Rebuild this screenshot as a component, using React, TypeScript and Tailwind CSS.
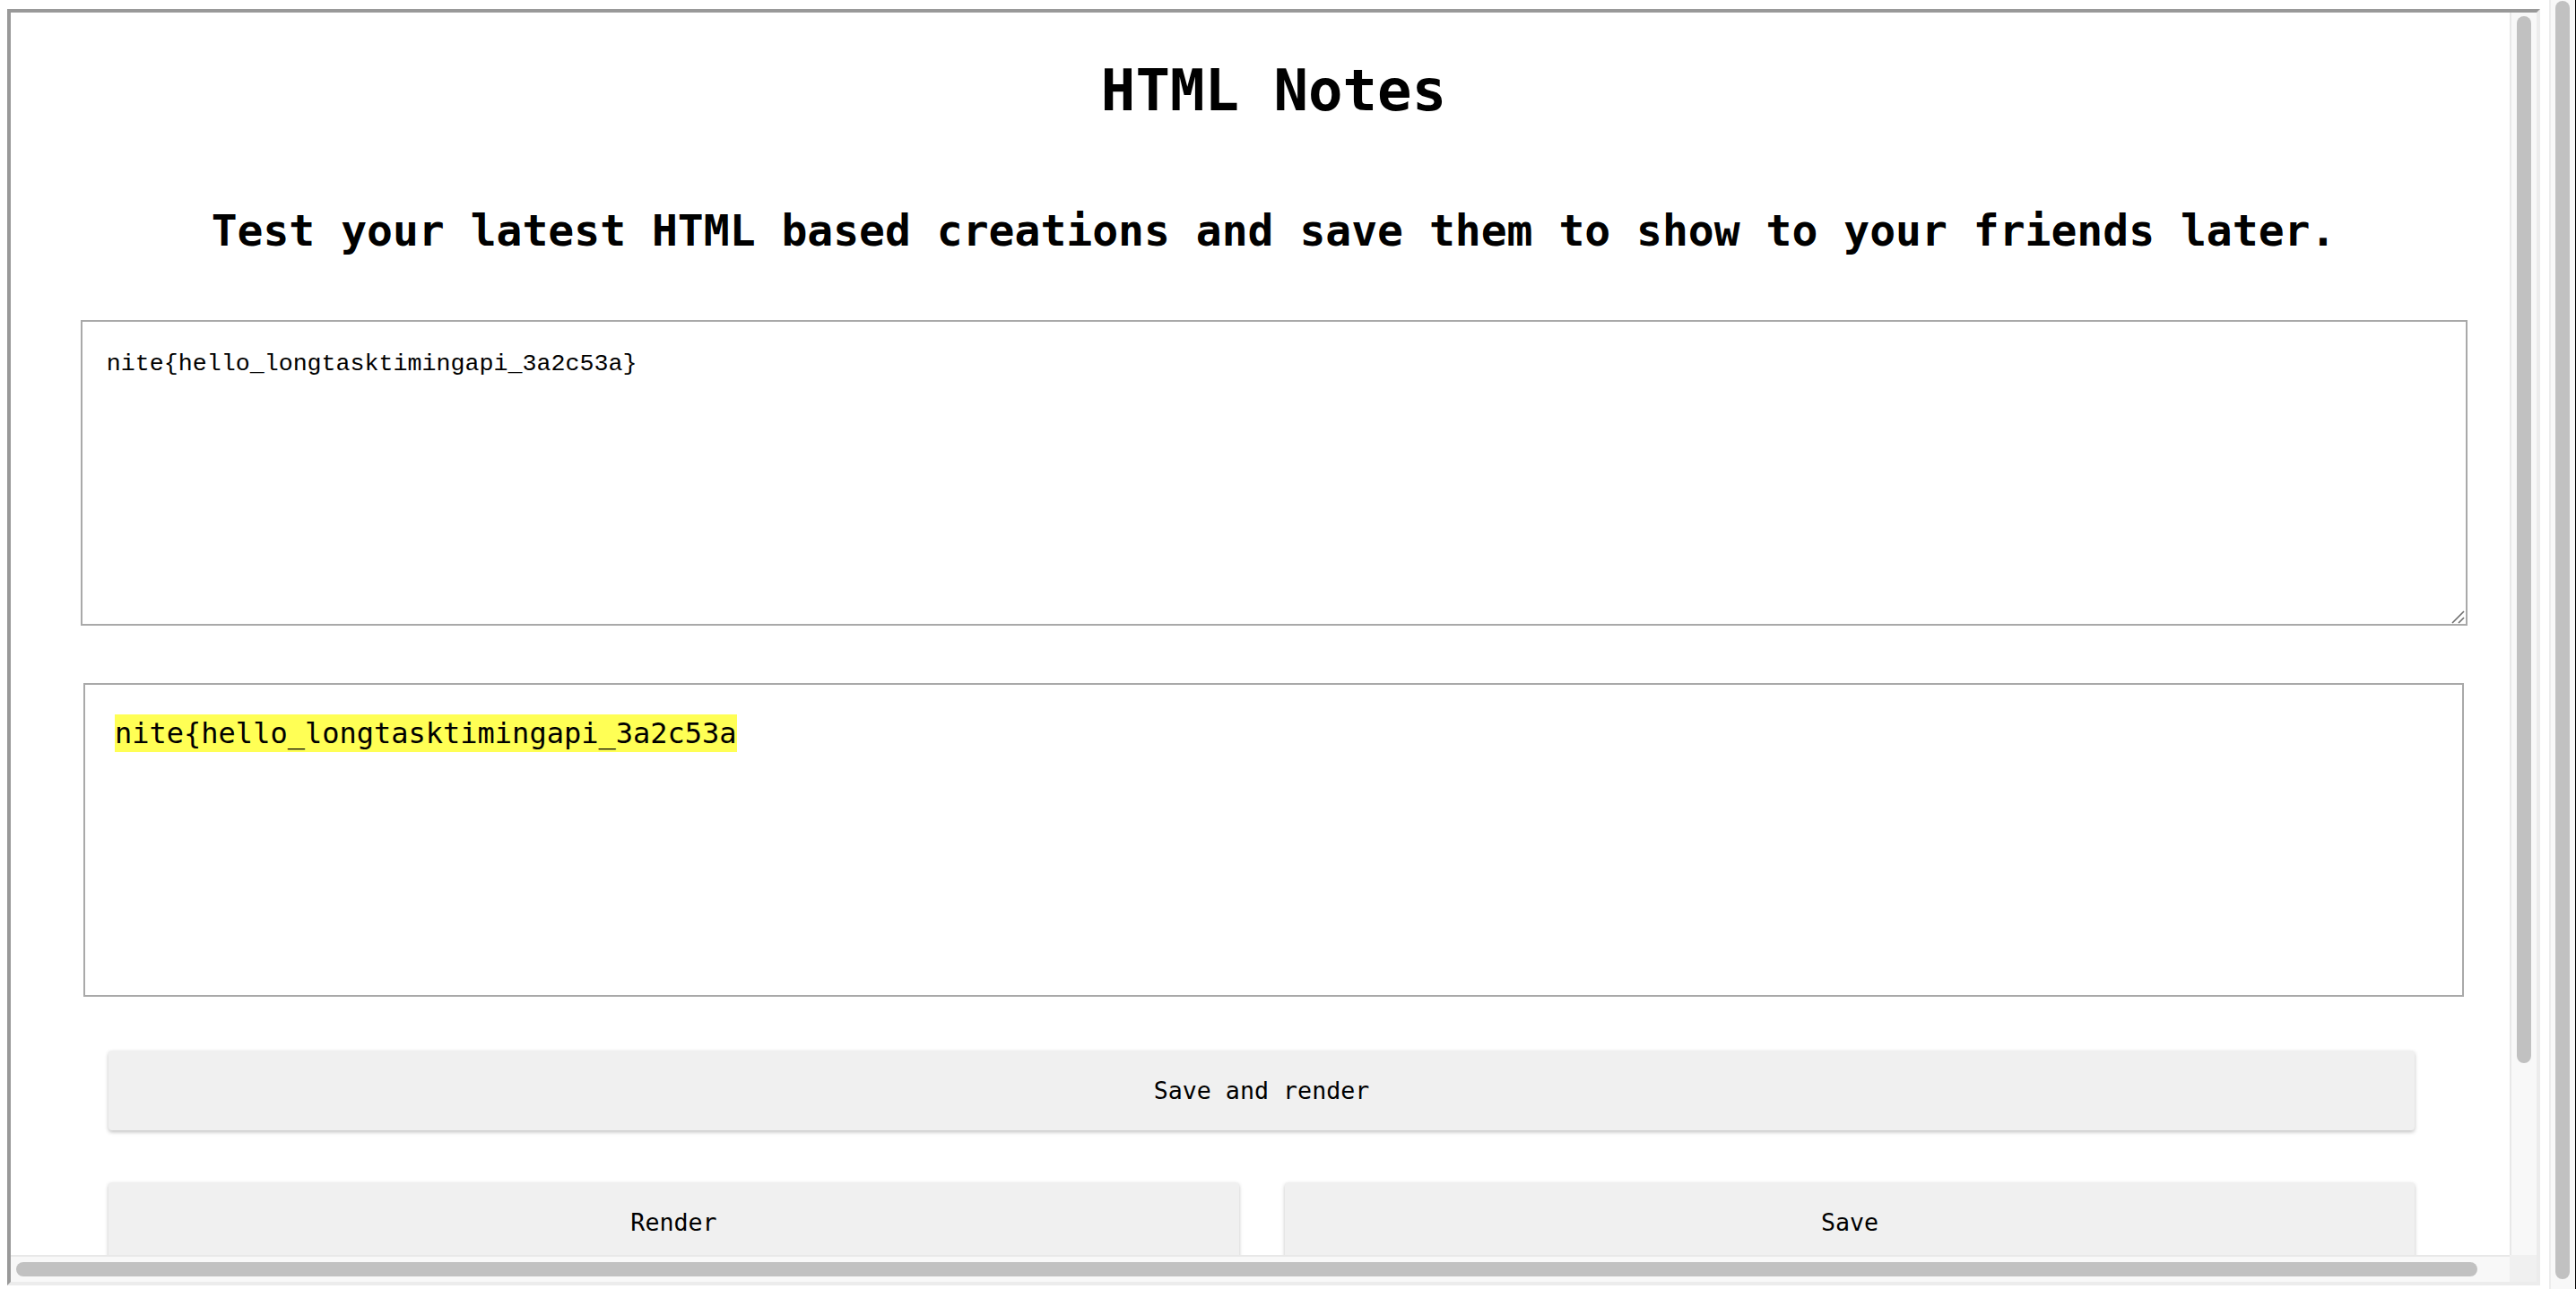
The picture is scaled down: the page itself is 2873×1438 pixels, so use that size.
const mono = "font-['DejaVu_Sans_Mono',monospace]";

function VTrack({ thumbTop, thumbHeight }: { thumbTop: number; thumbHeight: number }) {
  return (
    <div className="flex h-full w-[30px] shrink-0 flex-col border-l-2 border-[#e8e8e8] bg-[#f8f8f8] pl-[6px]">
      <div style={{ height: thumbTop }} />
      <div className="w-[16px] rounded-full bg-[#c1c1c1]" style={{ height: thumbHeight }} />
    </div>
  );
}

function ResizeGrip() {
  return (
    <svg
      className="absolute bottom-0 right-0"
      width="16"
      height="16"
      viewBox="0 0 16 16"
      fill="none"
      stroke="#6b6b6b"
      strokeWidth="1.6"
    >
      <line x1="1" y1="15" x2="14" y2="2" />
      <line x1="8" y1="15" x2="14" y2="9" />
    </svg>
  );
}

function Button({ label, className }: { label: string; className: string }) {
  return (
    <button
      type="button"
      className={`flex h-[89px] shrink-0 items-center justify-center rounded-[4px] bg-[#f0f0f0] text-[26.67px] text-black shadow-[0_2px_4px_rgba(0,0,0,0.25)] ${mono} ${className}`}
    >
      {label}
    </button>
  );
}

export default function App() {
  return (
    <div className="flex h-[1438px] w-[2873px] overflow-hidden bg-white">
      <div className="flex-1 pl-[8px] pt-[10px]">
        <div className="flex h-[1424px] w-[2825px] flex-col border-4 border-b-[#ececec] border-l-[#999] border-r-[#ececec] border-t-[#999]">
          <div className="flex h-[1386px]">
            <div className="w-[2787px] overflow-hidden">
              <div className={`flex w-[2817px] flex-col text-black ${mono}`}>
                <h1 className="pt-[50px] text-center text-[64px] font-bold leading-[74px]">HTML Notes</h1>
                <h2 className="mt-[91px] text-center text-[48px] font-bold leading-[56px]">
                  Test your latest HTML based creations and save them to show to your friends later.
                </h2>

                <div className="relative ml-[78px] mt-[72px] h-[341px] w-[2662px] border-2 border-[#a9a9a9] p-[26.67px] font-['Liberation_Mono',monospace] text-[26.67px]">
                  nite{"{"}hello_longtasktimingapi_3a2c53a{"}"}
                  <ResizeGrip />
                </div>

                <div className="ml-[81px] mt-[64px] h-[350px] w-[2655px] border-2 border-[#a9a9a9] pl-[33px] pt-[33px]">
                  <span className="inline-block bg-[#ffff55] text-[32px] leading-[42px]">
                    nite{"{"}hello_longtasktimingapi_3a2c53a
                  </span>
                </div>

                <Button label="Save and render" className="ml-[109px] mt-[60px] w-[2572px]" />

                <div className="ml-[109px] mt-[58px] flex gap-[51px]">
                  <Button label="Render" className="w-[1261px]" />
                  <Button label="Save" className="w-[1260px]" />
                </div>
              </div>
            </div>
            <VTrack thumbTop={4} thumbHeight={1168} />
          </div>
          <div className="flex h-[30px]">
            <div className="w-[2787px] border-t-2 border-[#e8e8e8] bg-[#f8f8f8] pl-[6px] pt-[6px]">
              <div className="h-[16px] w-[2745px] rounded-full bg-[#c1c1c1]" />
            </div>
            <div className="w-[30px] bg-[#f0f0f0]" />
          </div>
        </div>
      </div>
      <div className="h-[1438px] w-[30px] border-r border-black">
        <div className="flex h-full w-full flex-col border-l-2 border-[#ececec] bg-[#f8f8f8] pl-[5px] pt-[1px]">
          <div className="h-[1426px] w-[16px] rounded-full bg-[#c1c1c1]" />
        </div>
      </div>
    </div>
  );
}
